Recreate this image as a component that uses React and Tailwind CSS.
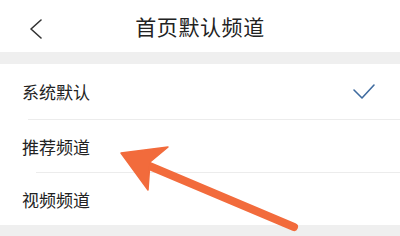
import React from "react";

export default function App() {
  const font = { fontFamily: '"Noto Sans CJK SC", "Noto Sans", sans-serif' };
  return (
    <div className="relative w-[400px] h-[236px] overflow-hidden bg-white" style={font}>
      <div className="flex flex-col h-full">
        <div className="relative h-[52px] flex items-center justify-center bg-white">
          <svg className="absolute left-[27px] top-[19px]" width="18" height="20" viewBox="0 0 18 20">
            <path d="M14 1 L4 10 L14 19" fill="none" stroke="#333" strokeWidth="1.6" strokeLinecap="round" strokeLinejoin="round" />
          </svg>
          <span className="text-[21px] text-[#222] tracking-[0.6px] leading-none">首页默认频道</span>
        </div>
        <div className="h-[12px] bg-[#efefef]" />
        <div className="h-[55px] flex items-center justify-between pl-[22px] pr-[24px]">
          <span className="text-[17px] text-[#222] leading-none">系统默认</span>
          <svg width="24" height="18" viewBox="0 0 24 18">
            <path d="M2 7 L10 15 L22 2" fill="none" stroke="#3f6b9f" strokeWidth="1.6" strokeLinecap="round" strokeLinejoin="round" />
          </svg>
        </div>
        <div className="ml-[28px] h-px bg-[#ececec]" />
        <div className="h-[52px] flex items-center pl-[22px]">
          <span className="text-[17px] text-[#222] leading-none">推荐频道</span>
        </div>
        <div className="ml-[36px] h-px bg-[#ececec]" />
        <div className="h-[52px] flex items-center pl-[22px]">
          <span className="text-[17px] text-[#222] leading-none">视频频道</span>
        </div>
        <div className="flex-1 bg-[#efefef]" />
      </div>
      <svg className="absolute left-0 top-0" width="400" height="236" viewBox="0 0 400 236">
        <line x1="140" y1="162" x2="294" y2="227" stroke="#f26b3c" strokeWidth="8" strokeLinecap="round" />
        <path d="M121 153 L168 147 L150 162 L148 190 Z" fill="#f26b3c" stroke="#f26b3c" strokeWidth="1.5" strokeLinejoin="round" />
      </svg>
    </div>
  );
}
